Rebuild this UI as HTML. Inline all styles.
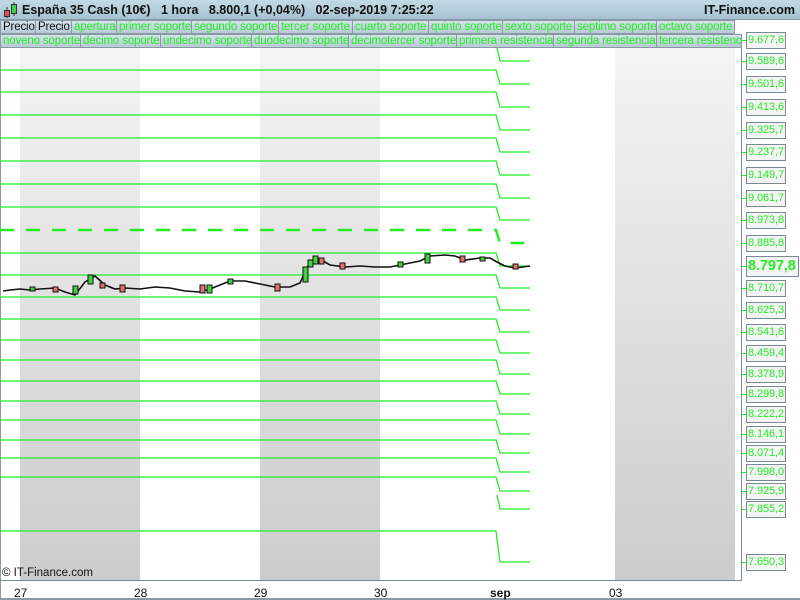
<!DOCTYPE html>
<html><head><meta charset="utf-8"><style>
*{margin:0;padding:0;box-sizing:border-box}
body{width:800px;height:600px;overflow:hidden;background:#fff;font-family:"Liberation Sans",sans-serif;position:relative}
#hdr{position:absolute;left:0;top:0;width:800px;height:20px;background:linear-gradient(#c2dae6,#a6c2d2);border-bottom:1px solid #8a9aa4;font-size:12.5px;font-weight:bold;color:#111;white-space:nowrap}
.t{position:absolute;height:14px;border:1px solid #8a9aa4;background:linear-gradient(#d4e2ea,#b8cad6);font-size:11.5px;line-height:12px;color:#22ee22;padding-left:2px;white-space:nowrap;overflow:hidden;letter-spacing:-0.15px}
.lb{position:absolute;left:746px;width:40px;height:17px;border:1px solid #7a8a94;background:#f4f4f4;color:#22ee22;font-size:11px;line-height:15px;padding-left:1px;white-space:nowrap;letter-spacing:-0.1px}
.tk{position:absolute;left:741px;width:5px;height:1px;background:#22ee22}
.ax{position:absolute;top:586px;font-size:12px;color:#111}
</style></head><body>
<div id="hdr">
<svg style="position:absolute;left:3px;top:2px" width="16" height="16"><line x1="4" y1="5" x2="4" y2="16" stroke="#333"/><rect x="1.5" y="8.5" width="5" height="6" fill="#e05050" stroke="#333"/><line x1="11" y1="0" x2="11" y2="14" stroke="#333"/><rect x="8.5" y="2.5" width="5" height="9" fill="#40d040" stroke="#333"/></svg>
<span style="position:absolute;left:22px;top:3px">España 35 Cash (10€)&nbsp;&nbsp;&nbsp;1 hora&nbsp;&nbsp;&nbsp;8.800,1 (+0,04%)&nbsp;&nbsp;&nbsp;02-sep-2019 7:25:22</span>
<span style="position:absolute;right:5px;top:3px">IT-Finance.com</span>
</div>
<div class="t" style="top:20px;left:0;width:36px;color:#111">Precio</div>
<div class="t" style="top:20px;left:35px;width:37px;color:#111">Precio</div>
<div class="t" style="top:20px;left:71px;width:46px">apertura</div>
<div class="t" style="top:20px;left:116px;width:76px">primer soporte</div>
<div class="t" style="top:20px;left:191px;width:88px">segundo soporte</div>
<div class="t" style="top:20px;left:278px;width:75px">tercer soporte</div>
<div class="t" style="top:20px;left:352px;width:77px">cuarto soporte</div>
<div class="t" style="top:20px;left:428px;width:75px">quinto soporte</div>
<div class="t" style="top:20px;left:502px;width:73px">sexto soporte</div>
<div class="t" style="top:20px;left:574px;width:83px">septimo soporte</div>
<div class="t" style="top:20px;left:656px;width:79px">octavo soporte</div>
<div class="t" style="top:34px;left:0;width:81px">noveno soporte</div>
<div class="t" style="top:34px;left:80px;width:81px">decimo soporte</div>
<div class="t" style="top:34px;left:160px;width:92px">undecimo soporte</div>
<div class="t" style="top:34px;left:251px;width:98px">duodecimo soporte</div>
<div class="t" style="top:34px;left:348px;width:109px">decimotercer soporte</div>
<div class="t" style="top:34px;left:456px;width:98px">primera resistencia</div>
<div class="t" style="top:34px;left:553px;width:104px">segunda resistencia</div>
<div class="t" style="top:34px;left:656px;width:86px">tercera resistencia</div>
<div style="position:absolute;left:0;top:48px;width:1px;height:552px;background:#8a9aa4"></div>
<div style="position:absolute;left:20px;top:48px;width:120px;height:532px;background:linear-gradient(#f4f4f4,#cccccc)"></div>
<div style="position:absolute;left:260px;top:48px;width:120px;height:532px;background:linear-gradient(#f4f4f4,#cccccc)"></div>
<div style="position:absolute;left:615px;top:48px;width:120px;height:532px;background:linear-gradient(#f4f4f4,#cccccc)"></div>
<div style="position:absolute;left:741px;top:48px;width:1px;height:533px;background:#7a8a94"></div>
<div style="position:absolute;left:0;top:580px;width:742px;height:1px;background:#7a8a94"></div>
<div style="position:absolute;left:0;top:598px;width:800px;height:2px;background:#8a9aa4"></div>
<svg style="position:absolute;left:0;top:0" width="742" height="581">
<g fill="none" stroke="#22ee22" stroke-width="1.3">
<path d="M497 48 L500 61 H530"/>
<path d="M0 70 H496 L500 84 H530"/>
<path d="M0 92 H496 L500 107 H530"/>
<path d="M0 115 H496 L500 130 H530"/>
<path d="M0 138 H496 L500 152 H530"/>
<path d="M0 161 H496 L500 175 H530"/>
<path d="M0 184 H496 L500 198 H530"/>
<path d="M0 207 H496 L500 220 H530"/>
<path d="M0 230 H496 L500 243 H530" stroke-dasharray="14,12" stroke-width="2.5"/>
<path d="M0 253 H496 L500 266 H530"/>
<path d="M0 275 H496 L500 288 H530"/>
<path d="M0 297 H496 L500 310 H530"/>
<path d="M0 319 H496 L500 332 H530"/>
<path d="M0 340 H496 L500 353 H530"/>
<path d="M0 360 H496 L500 374 H530"/>
<path d="M0 381 H496 L500 394 H530"/>
<path d="M0 401 H496 L500 414 H530"/>
<path d="M0 420 H496 L500 434 H530"/>
<path d="M0 440 H496 L500 453 H530"/>
<path d="M0 458 H496 L500 472 H530"/>
<path d="M0 477 H496 L500 491 H530"/>
<path d="M497 495 L500 509 H530"/>
<path d="M0 531 H496 L500 562 H530"/>
</g>
<polyline fill="none" stroke="#111" stroke-width="1.6" points="3,291 10,290 20,289 30,290 40,289 55,288 65,292 75,295 85,282 95,276 105,285 115,289 125,288 140,289 155,287 170,288 185,291 200,292 210,289 220,285 230,281 245,281 260,284 275,287 290,287 300,283 305,272 310,262 318,258 330,265 345,267 360,266 375,267 390,267 400,265 410,263 420,261 430,256 445,255 455,256 465,260 480,258 490,258 497,262 505,266 515,268 530,266"/>
<g stroke="#111" stroke-width="1">
<rect x="88" y="275" width="5" height="9" fill="#40d040"/><rect x="100" y="283" width="5" height="5" fill="#e07070"/><rect x="73" y="286" width="5" height="8" fill="#40d040"/><rect x="30" y="287" width="5" height="4" fill="#40d040"/><rect x="53" y="287" width="5" height="5" fill="#e07070"/><rect x="120" y="285" width="5" height="7" fill="#e07070"/>
<rect x="200" y="285" width="5" height="8" fill="#e07070"/><rect x="207" y="285" width="5" height="8" fill="#40d040"/><rect x="228" y="279" width="5" height="5" fill="#40d040"/><rect x="275" y="284" width="5" height="7" fill="#e07070"/>
<rect x="303" y="267" width="5" height="15" fill="#40d040"/><rect x="308" y="260" width="5" height="7" fill="#40d040"/><rect x="313" y="256" width="5" height="8" fill="#40d040"/><rect x="319" y="258" width="5" height="6" fill="#e07070"/><rect x="340" y="263" width="5" height="6" fill="#e07070"/>
<rect x="398" y="262" width="5" height="5" fill="#40d040"/><rect x="425" y="254" width="5" height="9" fill="#40d040"/><rect x="460" y="256" width="5" height="6" fill="#e07070"/><rect x="480" y="257" width="5" height="4" fill="#40d040"/><rect x="513" y="264" width="5" height="5" fill="#e07070"/>
</g>
</svg>
<div style="position:absolute;left:2px;top:567px;font-size:11.5px;color:#111">© IT-Finance.com</div>
<div class="ax" style="left:14px">27</div><div class="ax" style="left:134px">28</div><div class="ax" style="left:254px">29</div><div class="ax" style="left:374px">30</div><div class="ax" style="left:490px;font-weight:bold">sep</div><div class="ax" style="left:609px">03</div>
<div class="tk" style="top:40px"></div><div class="lb" style="top:32px">9.677,6</div>
<div class="tk" style="top:61px"></div><div class="lb" style="top:53px">9.589,6</div>
<div class="tk" style="top:84px"></div><div class="lb" style="top:76px">9.501,6</div>
<div class="tk" style="top:107px"></div><div class="lb" style="top:99px">9.413,6</div>
<div class="tk" style="top:130px"></div><div class="lb" style="top:122px">9.325,7</div>
<div class="tk" style="top:152px"></div><div class="lb" style="top:144px">9.237,7</div>
<div class="tk" style="top:175px"></div><div class="lb" style="top:167px">9.149,7</div>
<div class="tk" style="top:198px"></div><div class="lb" style="top:190px">9.061,7</div>
<div class="tk" style="top:220px"></div><div class="lb" style="top:212px">8.973,8</div>
<div class="tk" style="top:243px"></div><div class="lb" style="top:235px">8.885,8</div>
<div class="tk" style="top:266px"></div><div class="lb" style="top:256px;width:53px;height:21px;font-size:14.5px;font-weight:bold;line-height:19px">8.797,8</div>
<div class="tk" style="top:288px"></div><div class="lb" style="top:280px">8.710,7</div>
<div class="tk" style="top:310px"></div><div class="lb" style="top:302px">8.625,3</div>
<div class="tk" style="top:332px"></div><div class="lb" style="top:324px">8.541,6</div>
<div class="tk" style="top:353px"></div><div class="lb" style="top:345px">8.459,4</div>
<div class="tk" style="top:374px"></div><div class="lb" style="top:366px">8.378,9</div>
<div class="tk" style="top:394px"></div><div class="lb" style="top:386px">8.299,8</div>
<div class="tk" style="top:414px"></div><div class="lb" style="top:406px">8.222,2</div>
<div class="tk" style="top:434px"></div><div class="lb" style="top:426px">8.146,1</div>
<div class="tk" style="top:453px"></div><div class="lb" style="top:445px">8.071,4</div>
<div class="tk" style="top:472px"></div><div class="lb" style="top:464px">7.998,0</div>
<div class="tk" style="top:491px"></div><div class="lb" style="top:483px">7.925,9</div>
<div class="tk" style="top:509px"></div><div class="lb" style="top:501px">7.855,2</div>
<div class="tk" style="top:562px"></div><div class="lb" style="top:554px">7.650,3</div>
</body></html>
